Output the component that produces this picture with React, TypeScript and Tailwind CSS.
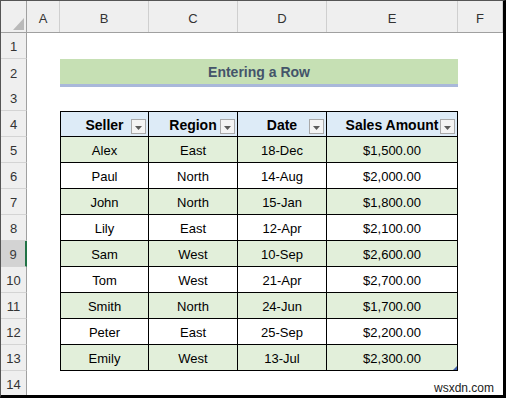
import React from "react";

const COLS = "grid grid-cols-[26px_33px_89px_89px_89px_131px_1fr]";

const rows: string[][] = [
  ["Alex", "East", "18-Dec", "$1,500.00"],
  ["Paul", "North", "14-Aug", "$2,000.00"],
  ["John", "North", "15-Jan", "$1,800.00"],
  ["Lily", "East", "12-Apr", "$2,100.00"],
  ["Sam", "West", "10-Sep", "$2,600.00"],
  ["Tom", "West", "21-Apr", "$2,700.00"],
  ["Smith", "North", "24-Jun", "$1,700.00"],
  ["Peter", "East", "25-Sep", "$2,200.00"],
  ["Emily", "West", "13-Jul", "$2,300.00"],
];

function FilterButton() {
  return (
    <div className="absolute right-[2px] bottom-[2px] w-[15px] h-[15px] bg-[#f4f4f4] border border-[#a9a9a9] flex items-center justify-center">
      <svg width="7" height="4" viewBox="0 0 7 4" className="mt-[2px]">
        <path d="M0 0 L7 0 L3.5 4 Z" fill="#5b5b5b" />
      </svg>
    </div>
  );
}

function RowHead({ n }: { n: number }) {
  const selected = n === 9;
  return (
    <div
      className={`flex items-center justify-center border-b border-[#d4d4d4] text-[13px] pt-[3px] ${
        selected
          ? "bg-[#d3d3d3] border-r-2 border-r-[#217346] text-[#3b3b3b]"
          : "bg-[#efefef] border-r border-r-[#a0a0a0] text-[#333]"
      }`}
    >
      {n}
    </div>
  );
}

export default function App() {
  const headers = ["Seller", "Region", "Date", "Sales Amount"];

  return (
    <div
      className="relative w-[506px] h-[398px] overflow-hidden bg-white border-t border-l border-t-[#555] border-l-[#555] border-r-[3px] border-b-[3px] border-black"
      style={{ fontFamily: '"Liberation Sans", Arial, sans-serif' }}
    >
      {/* column letters */}
      <div className={`${COLS} h-[32px] bg-[#efefef] border-b border-[#a0a0a0] text-[13px] text-[#333]`}>
        <div className="relative border-r border-[#a0a0a0]">
          <svg width="11" height="12" viewBox="0 0 11 12" className="absolute right-[2px] bottom-[2px]">
            <path d="M11 0 L11 12 L0 12 Z" fill="#b9b9b9" />
          </svg>
        </div>
        {["A", "B", "C", "D", "E", "F"].map((c) => (
          <div key={c} className="flex items-center justify-center pt-[4px] border-r border-[#cfcfcf]">
            {c}
          </div>
        ))}
      </div>

      {/* row 1 */}
      <div className={`${COLS} h-[26px]`}>
        <RowHead n={1} />
      </div>

      {/* row 2 - title */}
      <div className={`${COLS} h-[26px]`}>
        <RowHead n={2} />
        <div />
        <div className="col-span-4 relative z-10">
          <div className="h-[28px] bg-[#c6e0b4] border-b-[3px] border-[#a9b8da] flex items-center justify-center text-[14px] font-bold text-[#44546a] pt-[2px]">
            Entering a Row
          </div>
        </div>
      </div>

      {/* row 3 */}
      <div className={`${COLS} h-[26px]`}>
        <RowHead n={3} />
      </div>

      {/* row 4 - table header */}
      <div className={`${COLS} h-[26px]`}>
        <RowHead n={4} />
        <div />
        {headers.map((h, i) => (
          <div
            key={h}
            className={`relative flex items-center justify-center bg-[#ddebf7] border-t border-r border-b border-black text-[14px] font-bold text-black pt-[2px] ${
              i === 0 ? "border-l" : ""
            }`}
          >
            {h}
            <FilterButton />
          </div>
        ))}
      </div>

      {/* data rows 5-13 */}
      {rows.map((r, ri) => (
        <div key={ri} className={`${COLS} h-[26px]`}>
          <RowHead n={ri + 5} />
          <div />
          {r.map((v, ci) => (
            <div
              key={ci}
              className={`relative flex items-center justify-center border-r border-b border-black text-[13px] text-black pt-[2px] ${
                ri % 2 === 0 ? "bg-[#e2efda]" : "bg-white"
              } ${ci === 0 ? "border-l" : ""}`}
            >
              {v}
              {ri === rows.length - 1 && ci === 3 && (
                <svg width="4" height="4" viewBox="0 0 4 4" className="absolute right-0 bottom-0">
                  <path d="M4 0 L4 4 L0 4 Z" fill="#3f5fa8" />
                </svg>
              )}
            </div>
          ))}
        </div>
      ))}

      {/* row 14 */}
      <div className={`${COLS} h-[26px]`}>
        <RowHead n={14} />
      </div>

      <div className="absolute left-[433px] top-[378px] text-[12px] text-[#222]">wsxdn.com</div>
    </div>
  );
}
